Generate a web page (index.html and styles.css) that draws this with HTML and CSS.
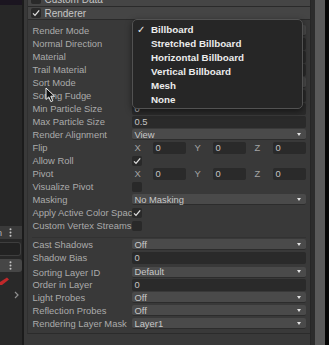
FILE: index.html
```html
<!DOCTYPE html>
<html>
<head>
  <title>Renderer Inspector</title>
  <link rel="stylesheet" href="styles.css">
</head>
<body>
  <div class="app">
    <aside class="sidebar">
      <div class="sidebar-top"></div>
      <div class="sidebar-fill"></div>
      <div class="side-row">
        <span class="side-text">n</span>
        <svg class="dots" width="3" height="9" viewBox="0 0 3 9"><circle cx="1.5" cy="1.2" r="1"/><circle cx="1.5" cy="4.5" r="1"/><circle cx="1.5" cy="7.8" r="1"/></svg>
      </div>
      <div class="side-input"></div>
      <div class="side-row light">
        <svg class="dots" width="3" height="9" viewBox="0 0 3 9"><circle cx="1.5" cy="1.2" r="1"/><circle cx="1.5" cy="4.5" r="1"/><circle cx="1.5" cy="7.8" r="1"/></svg>
      </div>
      <div class="side-bottom">
        <svg class="red-mark" width="10" height="10" viewBox="0 0 10 10"><path d="M0 6 L7 1.5 L9 3.5 L2 9 L0 9 Z" fill="#c0282a"/></svg>
        <svg class="chevron" width="5" height="8" viewBox="0 0 5 8"><polyline points="1,1 4,4 1,7" fill="none" stroke="#8e8e8e" stroke-width="1.2"/></svg>
      </div>
    </aside>

    <main class="inspector">
      <div class="frame">
        <div class="section-head custom">
          <span class="check"></span>
          <span>Custom Data</span>
        </div>
        <div class="section-head renderer">
          <span class="check"><svg width="10" height="10" viewBox="0 0 10 10"><polyline points="2,5.4 4,7.4 8.2,2.4" fill="none" stroke="#e0e0e0" stroke-width="1.3"/></svg></span>
          <span>Renderer</span>
        </div>

        <div class="rows">
          <!-- values of the first rows sit under the open menu -->
          <div class="row"><div class="label">Render Mode</div><div class="value"><div class="dropdown"><span class="arrow"></span></div></div></div>
          <div class="row"><div class="label">Normal Direction</div><div class="value"><div class="field"></div></div></div>
          <div class="row"><div class="label">Material</div><div class="value"><div class="field"></div></div></div>
          <div class="row"><div class="label">Trail Material</div><div class="value"><div class="field"></div></div></div>
          <div class="row"><div class="label">Sort Mode</div><div class="value"><div class="dropdown"><span class="arrow"></span></div></div></div>
          <div class="row"><div class="label">Sorting Fudge</div><div class="value"><div class="field"></div></div></div>
          <div class="row"><div class="label">Min Particle Size</div><div class="value"><div class="field">0</div></div></div>
          <div class="row"><div class="label">Max Particle Size</div><div class="value"><div class="field">0.5</div></div></div>
          <div class="row"><div class="label">Render Alignment</div><div class="value"><div class="dropdown">View<span class="arrow"></span></div></div></div>
          <div class="row">
            <div class="label">Flip</div>
            <div class="value xyz">
              <div class="axis"><span class="axis-label">X</span><span class="field">0</span></div>
              <div class="axis"><span class="axis-label">Y</span><span class="field">0</span></div>
              <div class="axis"><span class="axis-label">Z</span><span class="field">0</span></div>
            </div>
          </div>
          <div class="row"><div class="label">Allow Roll</div><div class="value"><span class="check"><svg width="10" height="10" viewBox="0 0 10 10"><polyline points="2,5.4 4,7.4 8.2,2.4" fill="none" stroke="#e0e0e0" stroke-width="1.3"/></svg></span></div></div>
          <div class="row">
            <div class="label">Pivot</div>
            <div class="value xyz">
              <div class="axis"><span class="axis-label">X</span><span class="field">0</span></div>
              <div class="axis"><span class="axis-label">Y</span><span class="field">0</span></div>
              <div class="axis"><span class="axis-label">Z</span><span class="field">0</span></div>
            </div>
          </div>
          <div class="row"><div class="label">Visualize Pivot</div><div class="value"><span class="check"></span></div></div>
          <div class="row"><div class="label">Masking</div><div class="value"><div class="dropdown">No Masking<span class="arrow"></span></div></div></div>
          <div class="row"><div class="label">Apply Active Color Space</div><div class="value"><span class="check"><svg width="10" height="10" viewBox="0 0 10 10"><polyline points="2,5.4 4,7.4 8.2,2.4" fill="none" stroke="#e0e0e0" stroke-width="1.3"/></svg></span></div></div>
          <div class="row"><div class="label">Custom Vertex Streams</div><div class="value"><span class="check"></span></div></div>

          <div class="separator"></div>

          <div class="row"><div class="label">Cast Shadows</div><div class="value"><div class="dropdown">Off<span class="arrow"></span></div></div></div>
          <div class="row"><div class="label">Shadow Bias</div><div class="value"><div class="field">0</div></div></div>
          <div class="row short"><div class="label">Sorting Layer ID</div><div class="value"><div class="dropdown">Default<span class="arrow"></span></div></div></div>
          <div class="row"><div class="label">Order in Layer</div><div class="value"><div class="field">0</div></div></div>
          <div class="row"><div class="label">Light Probes</div><div class="value"><div class="dropdown">Off<span class="arrow"></span></div></div></div>
          <div class="row"><div class="label">Reflection Probes</div><div class="value"><div class="dropdown">Off<span class="arrow"></span></div></div></div>
          <div class="row"><div class="label">Rendering Layer Mask</div><div class="value"><div class="dropdown">Layer1<span class="arrow"></span></div></div></div>
        </div>
      </div>
    </main>

    <div class="edge-dark"></div>
    <div class="edge-gray"></div>
    <div class="edge-black"></div>

    <!-- open Render Mode menu -->
    <div class="popup">
      <div class="popup-item"><span class="tick">✓</span>Billboard</div>
      <div class="popup-item"><span class="tick"></span>Stretched Billboard</div>
      <div class="popup-item"><span class="tick"></span>Horizontal Billboard</div>
      <div class="popup-item"><span class="tick"></span>Vertical Billboard</div>
      <div class="popup-item"><span class="tick"></span>Mesh</div>
      <div class="popup-item"><span class="tick"></span>None</div>
    </div>

    <svg class="cursor" width="11" height="16" viewBox="0 0 11 16">
      <path d="M1 1 L1 12.5 L3.8 9.9 L5.8 14.6 L7.8 13.8 L5.8 9.2 L9.6 9.2 Z" fill="#111" stroke="#eee" stroke-width="1"/>
    </svg>
  </div>
</body>
</html>
```

FILE: styles.css
```css
/* Base */
* {
  box-sizing: border-box;
}

body {
  margin: 0;
  background-color: #000;
  font-family: "Liberation Sans", Arial, sans-serif;
  overflow: hidden;
}

.app {
  position: relative;
  display: flex;
  width: 329px;
  height: 345px;
}

/* Left sidebar */
.sidebar {
  width: 25px;
  display: flex;
  flex-direction: column;
  background-color: #272727;
  border-right: 2px solid #1b1b1b;
}

.sidebar-top {
  height: 5px;
  background-color: #1b1520;
}

.sidebar-fill {
  height: 221px;
}

.side-row {
  height: 13px;
  display: flex;
  align-items: center;
  justify-content: flex-end;
  padding-right: 10px;
  background-color: #3a3a3a;
  position: relative;
  overflow: hidden;
}

.side-row.light {
  margin-top: 3px;
  background-color: #464646;
  border-radius: 0 3px 3px 0;
}

.side-text {
  position: absolute;
  left: -3px;
  font-size: 9px;
  color: #bbb;
}

.dots {
  fill: #c4c4c4;
}

.side-input {
  height: 14px;
  margin-top: 3px;
  width: 21px;
  background-color: #222;
  border: 1px solid #3e3e3e;
  border-left: none;
  border-radius: 0 3px 3px 0;
}

.side-bottom {
  flex: 1;
  display: flex;
  flex-direction: column;
  background-color: #292929;
  padding-top: 4px;
}

.chevron {
  margin-left: 14px;
  margin-top: 5px;
}

/* Inspector */
.inspector {
  flex: 1;
  background-color: #393939;
  padding-left: 3px;
}

.frame {
  margin-top: -8px;
  border-left: 1px solid #303030;
  border-bottom: 1px solid #2b2b2b;
}

.section-head {
  display: flex;
  align-items: center;
  gap: 3px;
  padding-left: 3px;
  background-color: #454545;
  border-bottom: 1px solid #2a2a2a;
  font-size: 10px;
  color: #c6c6c6;
}

.section-head.custom {
  height: 15px;
}

.section-head.renderer {
  height: 13px;
}

.rows {
  padding: 4px 4px 3px 4px;
}

.row {
  height: 13px;
  display: flex;
  align-items: center;
}

.row.short {
  height: 12px;
  margin-top: 2px;
}

.label {
  width: 100px;
  flex-shrink: 0;
  font-size: 9.4px;
  color: #ababab;
  white-space: nowrap;
  overflow: hidden;
}

.value {
  flex: 1;
  display: flex;
  align-items: center;
  font-size: 9.4px;
  color: #c4c4c4;
}

.field {
  flex: 1;
  height: 12px;
  line-height: 12px;
  padding-left: 2px;
  background-color: #2a2a2a;
  border-radius: 2px;
  white-space: nowrap;
  overflow: hidden;
}

.dropdown {
  flex: 1;
  height: 11px;
  display: flex;
  align-items: center;
  justify-content: space-between;
  padding: 0 5px 0 2px;
  background-color: #4a4a4a;
  border-bottom: 1px solid #2c2c2c;
  border-radius: 2px;
  color: #c8c8c8;
}

.arrow {
  width: 0;
  height: 0;
  margin-left: auto;
  border-left: 2.5px solid transparent;
  border-right: 2.5px solid transparent;
  border-top: 3px solid #e2e2e2;
}

.check {
  width: 10px;
  height: 10px;
  flex-shrink: 0;
  background-color: #292929;
  border-radius: 2px;
  display: flex;
}

.xyz {
  gap: 6px;
}

.axis {
  width: 54px;
  display: flex;
  align-items: center;
}

.axis-label {
  width: 21px;
  padding-left: 2px;
  color: #a4a4a4;
}

.axis .field {
  width: 33px;
  flex: none;
}

.separator {
  height: 1px;
  margin-top: 5px;
  background-color: #323232;
}

/* Right edge */
.edge-dark {
  width: 5px;
  background-color: #2c2c2c;
  border-left: 1px solid #262626;
}

.edge-gray {
  width: 10px;
  background-color: #595959;
}

.edge-black {
  width: 4px;
  background-color: #050505;
}

/* Popup menu */
.popup {
  position: absolute;
  left: 132px;
  top: 19px;
  width: 171px;
  height: 90px;
  padding-top: 2px;
  background-color: #262626;
  border: 1px solid #525252;
  border-radius: 5px;
  box-shadow: 0 2px 6px rgba(0, 0, 0, 0.5);
}

.popup-item {
  height: 14px;
  display: flex;
  align-items: center;
  font-size: 9.8px;
  font-weight: bold;
  color: #ececec;
}

.tick {
  width: 18px;
  padding-left: 4px;
  font-family: "DejaVu Sans", sans-serif;
  font-weight: normal;
  font-size: 10px;
}

.cursor {
  position: absolute;
  left: 45px;
  top: 87px;
}
```
